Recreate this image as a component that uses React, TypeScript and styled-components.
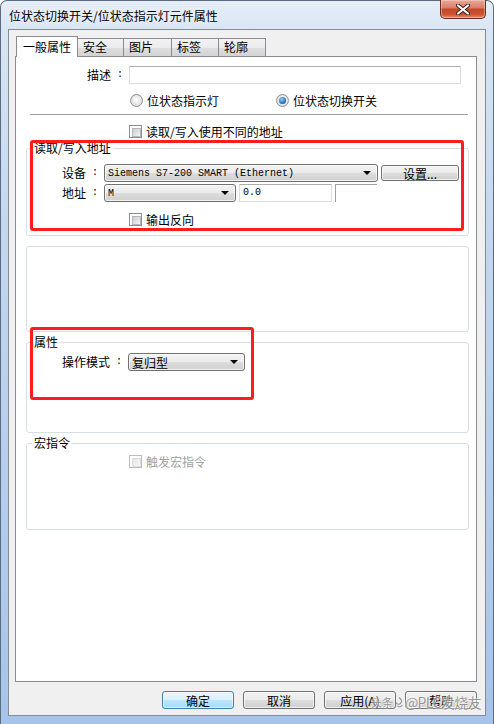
import React from "react";
import styled, { createGlobalStyle, css } from "styled-components";

const GlobalStyle = createGlobalStyle`
  html, body { margin: 0; padding: 0; background: #ffffff; }
  body {
    font-family: "Noto Sans CJK SC", "Noto Sans", sans-serif;
    font-size: 12px;
    color: #000;
  }
  * { box-sizing: border-box; }
`;

const MONO = `"Liberation Mono", "DejaVu Sans Mono", monospace`;

const Window = styled.div`
  position: relative;
  width: 494px;
  height: 724px;
  display: flex;
  flex-direction: column;
  padding: 0 7px 8px;
  border-radius: 7px 7px 0 0;
  border: 1px solid #5b6c82;
  border-bottom: none;
  background: linear-gradient(
    180deg,
    #e6eef7 0px,
    #d9e6f4 28px,
    #c5d9ef 200px,
    #b4cdec 500px,
    #a6c4ea 100%
  );
`;

const TitleBar = styled.div`
  height: 28px;
  display: flex;
  align-items: flex-start;
  justify-content: space-between;
`;

const Title = styled.span`
  margin: 7px 0 0 1px;
  line-height: 15px;
  font-size: 12px;
  color: #000;
  text-shadow: 0 0 6px rgba(255, 255, 255, 0.9);
`;

const CloseButton = styled.div`
  width: 46px;
  height: 19px;
  margin-top: -1px;
  border: 1px solid #6b2a22;
  border-top: none;
  border-radius: 0 0 5px 5px;
  display: flex;
  align-items: center;
  justify-content: center;
  background: linear-gradient(
    180deg,
    #e9a99b 0%,
    #d87b67 45%,
    #c3462c 50%,
    #cf5330 80%,
    #e3906c 100%
  );
  box-shadow: inset 0 0 0 1px rgba(255, 220, 210, 0.45);
`;

const Client = styled.div`
  flex: 1;
  display: flex;
  flex-direction: column;
  padding: 6px 8px 6px 6px;
  background: #f0f0f0;
  border: 1px solid #838b96;
`;

const TabStrip = styled.div`
  height: 20px;
  display: flex;
  align-items: flex-end;
  padding-left: 1px;
`;

const Tab = styled.div<{ $w: number; $active?: boolean }>`
  width: ${(p) => p.$w}px;
  height: 18px;
  margin-left: -1px;
  padding-left: 5px;
  line-height: 16px;
  font-size: 12px;
  border: 1px solid #898c95;
  border-bottom: none;
  background: linear-gradient(180deg, #f3f3f3 0%, #ebebeb 50%, #dedede 51%, #d4d4d4 100%);
  ${(p) =>
    p.$active &&
    css`
      position: relative;
      z-index: 2;
      height: 21px;
      margin-bottom: -1px;
      margin-left: 0;
      padding-left: 6px;
      line-height: 19px;
      background: #ffffff;
    `}
`;

const Panel = styled.div`
  position: relative;
  flex: 1;
  display: flex;
  flex-direction: column;
  background: #ffffff;
  border: 1px solid #898c95;
`;

const Field = styled.div<{ $indent: number; $mt: number }>`
  display: flex;
  align-items: center;
  margin-top: ${(p) => p.$mt}px;
  padding-left: ${(p) => p.$indent}px;
  height: 18px;
`;

const Label = styled.span`
  display: flex;
  align-items: center;
  line-height: 18px;
  white-space: nowrap;
`;

const Colon = styled.span`
  margin: 0 6px;
  font-family: ${MONO};
  font-size: 10px;
`;

const TextBox = styled.div<{ $w: number }>`
  width: ${(p) => p.$w}px;
  height: 18px;
  padding-left: 3px;
  line-height: 16px;
  font-family: ${MONO};
  font-size: 10px;
  background: #ffffff;
  border: 1px solid #dadde3;
  border-top-color: #abadb3;
`;

const StaticBox = styled.div<{ $w: number }>`
  width: ${(p) => p.$w}px;
  height: 18px;
  border-left: 1px solid #a0a0a0;
  border-top: 1px solid #a0a0a0;
`;

const faceGradient = css`
  border: 1px solid #707070;
  border-radius: 3px;
  background: linear-gradient(180deg, #f2f2f2 0%, #ebebeb 50%, #dddddd 51%, #cfcfcf 100%);
  box-shadow: inset 0 0 0 1px rgba(255, 255, 255, 0.7);
`;

const Combo = styled.div<{ $w: number; $mono?: boolean }>`
  ${faceGradient};
  width: ${(p) => p.$w}px;
  height: 18px;
  display: flex;
  align-items: center;
  justify-content: space-between;
  padding: 0 6px 0 3px;
  font-family: ${(p) => (p.$mono ? MONO : `"Noto Sans CJK SC", sans-serif`)};
  font-size: ${(p) => (p.$mono ? 10 : 12)}px;
  white-space: pre;
`;

const Arrow = styled.span`
  width: 0;
  height: 0;
  border-left: 4px solid transparent;
  border-right: 4px solid transparent;
  border-top: 4px solid #000;
`;

const Button = styled.div<{ $w: number; $h?: number; $default?: boolean }>`
  ${faceGradient};
  width: ${(p) => p.$w}px;
  height: ${(p) => p.$h ?? 18}px;
  display: flex;
  align-items: center;
  justify-content: center;
  font-size: 12px;
  white-space: nowrap;
  ${(p) =>
    p.$default &&
    css`
      border-color: #3c7fb1;
      background: linear-gradient(180deg, #eaf6fd 0%, #d9f0fc 50%, #bee6fd 51%, #a7d9f5 100%);
      box-shadow: inset 0 0 0 1px rgba(255, 255, 255, 0.6);
    `}
`;

const Option = styled.div<{ $w?: number; $disabled?: boolean }>`
  display: flex;
  align-items: center;
  gap: 4px;
  width: ${(p) => (p.$w ? `${p.$w}px` : "auto")};
  line-height: 14px;
  color: ${(p) => (p.$disabled ? "#a0a0a0" : "#000")};
`;

const Radio = styled.span<{ $checked?: boolean }>`
  width: 13px;
  height: 13px;
  border-radius: 50%;
  border: 1px solid #8e8f8f;
  display: flex;
  align-items: center;
  justify-content: center;
  background: radial-gradient(circle at 50% 45%, #ffffff 0%, #e6e6e6 55%, #cfcfcf 100%);
  &::after {
    content: "";
    width: 7px;
    height: 7px;
    border-radius: 50%;
    background: ${(p) =>
      p.$checked
        ? "radial-gradient(circle at 40% 35%, #8fd0f6 0%, #2a7fc0 55%, #173f6e 100%)"
        : "transparent"};
  }
`;

const Check = styled.span<{ $disabled?: boolean }>`
  width: 13px;
  height: 13px;
  padding: 2px;
  background: #ffffff;
  border: 1px solid ${(p) => (p.$disabled ? "#bcbcbc" : "#8e8f8f")};
  &::after {
    content: "";
    display: block;
    width: 100%;
    height: 100%;
    border: 1px solid ${(p) => (p.$disabled ? "#dedede" : "#b4b8be")};
    background: ${(p) =>
      p.$disabled
        ? "linear-gradient(135deg, #e4e4e4, #f8f8f8)"
        : "linear-gradient(135deg, #c9cdd3, #f4f4f4)"};
  }
`;

const Row = styled.div<{ $indent: number; $mt: number }>`
  display: flex;
  align-items: center;
  height: 13px;
  margin-top: ${(p) => p.$mt}px;
  padding-left: ${(p) => p.$indent}px;
`;

const Separator = styled.div`
  height: 1px;
  margin: 7px 8px 0 14px;
  background: #a0a0a0;
`;

const Group = styled.fieldset<{ $mt: number; $h?: number }>`
  margin: ${(p) => p.$mt}px 7px 0 10px;
  padding: 0 0 9px 0;
  min-width: 0;
  border: 1px solid #d5dfe5;
  border-radius: 3px;
  ${(p) => p.$h !== undefined && `height: ${p.$h}px;`}
`;

const Legend = styled.legend`
  margin-left: 5px;
  padding: 0 2px;
  line-height: 14px;
  font-size: 12px;
`;

const Gap = styled.div<{ $w: number }>`
  width: ${(p) => p.$w}px;
  flex: none;
`;

const Highlight = styled.div<{ $x: number; $y: number; $w: number; $h: number }>`
  position: absolute;
  left: ${(p) => p.$x}px;
  top: ${(p) => p.$y}px;
  width: ${(p) => p.$w}px;
  height: ${(p) => p.$h}px;
  border: 3px solid #fe1d1d;
  border-radius: 3px;
  pointer-events: none;
  z-index: 3;
`;

const ButtonBar = styled.div`
  margin-top: 9px;
  display: flex;
  justify-content: flex-end;
  gap: 9px;
`;

const Watermark = styled.div`
  position: absolute;
  right: 12px;
  bottom: 12px;
  display: flex;
  align-items: center;
  gap: 1px;
  color: rgba(80, 80, 80, 0.6);
  text-shadow: 0 0 2px #fff, 0 0 2px #fff;
  z-index: 5;
  white-space: nowrap;
`;

const WmSmall = styled.span`
  font-size: 11px;
`;

const WmBig = styled.span`
  font-size: 14px;
  letter-spacing: -0.6px;
`;

function CloseGlyph() {
  return (
    <svg width="14" height="11" viewBox="0 0 14 11">
      <path d="M2 1.5 L12 9.5 M12 1.5 L2 9.5" stroke="#3a1a16" strokeWidth="4" strokeLinecap="round" />
      <path d="M2 1.5 L12 9.5 M12 1.5 L2 9.5" stroke="#ffffff" strokeWidth="2.2" strokeLinecap="round" />
    </svg>
  );
}

function WmIcon() {
  return (
    <svg width="10" height="13" viewBox="0 0 12 14">
      <path
        d="M6 1 C9 3 10 6 8 8 C6 10 3 9 3 7 M4 11 C6 13 9 12 10 10"
        stroke="rgba(80,80,80,0.6)"
        strokeWidth="1.3"
        fill="none"
      />
    </svg>
  );
}

const tabs = [
  { name: "一般属性", w: 62, active: true },
  { name: "安全", w: 47 },
  { name: "图片", w: 49 },
  { name: "标签", w: 48 },
  { name: "轮廓", w: 48 },
];

export default function App() {
  return (
    <>
      <GlobalStyle />
      <Window>
        <TitleBar>
          <Title>位状态切换开关/位状态指示灯元件属性</Title>
          <CloseButton>
            <CloseGlyph />
          </CloseButton>
        </TitleBar>
        <Client>
          <TabStrip>
            {tabs.map((t) => (
              <Tab key={t.name} $w={t.w} $active={t.active}>
                {t.name}
              </Tab>
            ))}
          </TabStrip>
          <Panel>
            <Field $indent={71} $mt={9}>
              <Label>
                描述<Colon>:</Colon>
              </Label>
              <TextBox $w={332} />
            </Field>
            <Row $indent={114} $mt={10}>
              <Option $w={146}>
                <Radio />
                位状态指示灯
              </Option>
              <Option>
                <Radio $checked />
                位状态切换开关
              </Option>
            </Row>
            <Separator />
            <Row $indent={113} $mt={10}>
              <Option>
                <Check />
                读取/写入使用不同的地址
              </Option>
            </Row>

            <Group $mt={3}>
              <Legend>读取/写入地址</Legend>
              <Field $indent={35} $mt={9}>
                <Label>
                  设备<Colon>:</Colon>
                </Label>
                <Combo $w={274} $mono>
                  Siemens S7-200 SMART (Ethernet)
                  <Arrow />
                </Combo>
                <Gap $w={3} />
                <Button $w={78} $h={16}>
                  设置...
                </Button>
              </Field>
              <Field $indent={35} $mt={2}>
                <Label>
                  地址<Colon>:</Colon>
                </Label>
                <Combo $w={132} $mono>
                  M
                  <Arrow />
                </Combo>
                <Gap $w={3} />
                <TextBox $w={93}>0.0</TextBox>
                <Gap $w={3} />
                <StaticBox $w={42} />
              </Field>
              <Row $indent={102} $mt={11}>
                <Option>
                  <Check />
                  输出反向
                </Option>
              </Row>
            </Group>

            <Group $mt={10} $h={86} />

            <Group $mt={3} $h={98}>
              <Legend>属性</Legend>
              <Field $indent={35} $mt={4}>
                <Label>
                  操作模式<Colon>:</Colon>
                </Label>
                <Combo $w={117}>
                  复归型
                  <Arrow />
                </Combo>
              </Field>
            </Group>

            <Group $mt={3} $h={94}>
              <Legend>宏指令</Legend>
              <Row $indent={102} $mt={5}>
                <Option $disabled>
                  <Check $disabled />
                  触发宏指令
                </Option>
              </Row>
            </Group>

            <Highlight $x={14} $y={83} $w={434} $h={91} />
            <Highlight $x={14} $y={270} $w={224} $h={73} />
          </Panel>
          <ButtonBar>
            <Button $w={72} $default>
              确定
            </Button>
            <Button $w={72}>取消</Button>
            <Button $w={72}>应用(A)</Button>
            <Button $w={72}>帮助</Button>
          </ButtonBar>
        </Client>
        <Watermark>
          <WmSmall>头条</WmSmall>
          <WmIcon />
          <WmBig>@PLC发烧友</WmBig>
        </Watermark>
      </Window>
    </>
  );
}
